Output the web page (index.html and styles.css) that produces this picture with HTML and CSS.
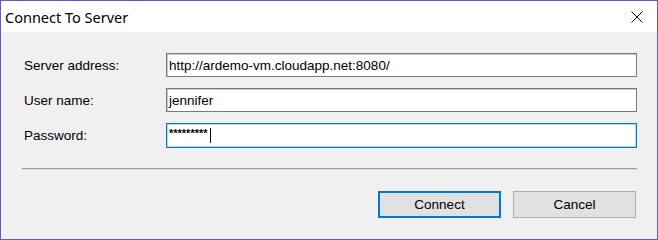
FILE: index.html
```html
<!DOCTYPE html>
<html lang="en">
<head>
    <meta charset="UTF-8">
    <title>Connect To Server</title>
    <link rel="stylesheet" href="styles.css">
</head>
<body>
    <div class="window">
        <div class="titlebar">
            <span class="title">Connect To Server</span>
            <span class="close">
                <svg width="12" height="12" viewBox="0 0 12 12">
                    <path d="M0.5 0.5 L11.5 11.5 M11.5 0.5 L0.5 11.5" stroke="#000" stroke-width="1" fill="none"/>
                </svg>
            </span>
        </div>

        <div class="content">
            <div class="form">
                <label class="label">Server address:</label>
                <div class="field">http://ardemo-vm.cloudapp.net:8080/</div>

                <label class="label">User name:</label>
                <div class="field">jennifer</div>

                <label class="label">Password:</label>
                <div class="field focused"><span class="secret">*********</span><span class="caret"></span></div>
            </div>

            <div class="separator"></div>

            <div class="buttons">
                <button class="btn default">Connect</button>
                <button class="btn">Cancel</button>
            </div>
        </div>
    </div>
</body>
</html>
```

FILE: styles.css
```css
body {
    margin: 0;
    font-family: "Liberation Sans", Arial, sans-serif;
}

.window {
    width: 658px;
    height: 240px;
    box-sizing: border-box;
    border: 1px solid #5b5bd6;
    background-color: #f0f0f0;
    display: flex;
    flex-direction: column;
}

.titlebar {
    height: 31px;
    background-color: #fff;
    display: flex;
    align-items: center;
    justify-content: space-between;
    padding: 0 14px 0 4px;
}

.title {
    font-family: "Noto Sans", "Open Sans", sans-serif;
    font-size: 14.5px;
    color: #000;
    padding-top: 1px;
}

.close {
    display: flex;
}

.content {
    padding: 21px 20px 0 20px;
}

.form {
    display: grid;
    grid-template-columns: 142px 471px;
    row-gap: 11px;
    align-items: center;
    padding-left: 3px;
}

.label {
    font-size: 13.5px;
    color: #000;
}

.field {
    height: 24px;
    box-sizing: border-box;
    border: 1px solid #7a7a7a;
    box-shadow: inset 1px 1px 0 #c8c8c8;
    background-color: #fff;
    padding: 0 2px;
    font-size: 13.5px;
    color: #000;
    display: flex;
    align-items: center;
}

.field.focused {
    height: 25px;
    border-color: #0078d7;
    box-shadow: inset 0 0 0 1px #b6d7f3;
}

.secret {
    font-size: 11px;
    font-weight: bold;
    letter-spacing: 0;
    line-height: 1;
    margin-top: -5px;
}

.caret {
    width: 1px;
    height: 15px;
    background-color: #000;
    margin-left: 2px;
}

.separator {
    margin: 20px 0 0 1px;
    height: 1px;
    border-top: 1px solid #a0a0a0;
    background-color: #d8d8d8;
}

.buttons {
    display: flex;
    justify-content: flex-end;
    gap: 12px;
    margin-top: 21px;
    padding-right: 1px;
}

.btn {
    width: 123px;
    height: 27px;
    box-sizing: border-box;
    border: 1px solid #adadad;
    background-color: #e1e1e1;
    font-family: "Liberation Sans", Arial, sans-serif;
    font-size: 13.5px;
    color: #000;
    padding: 0;
}

.btn.default {
    border: 2px solid #0078d7;
}
```
